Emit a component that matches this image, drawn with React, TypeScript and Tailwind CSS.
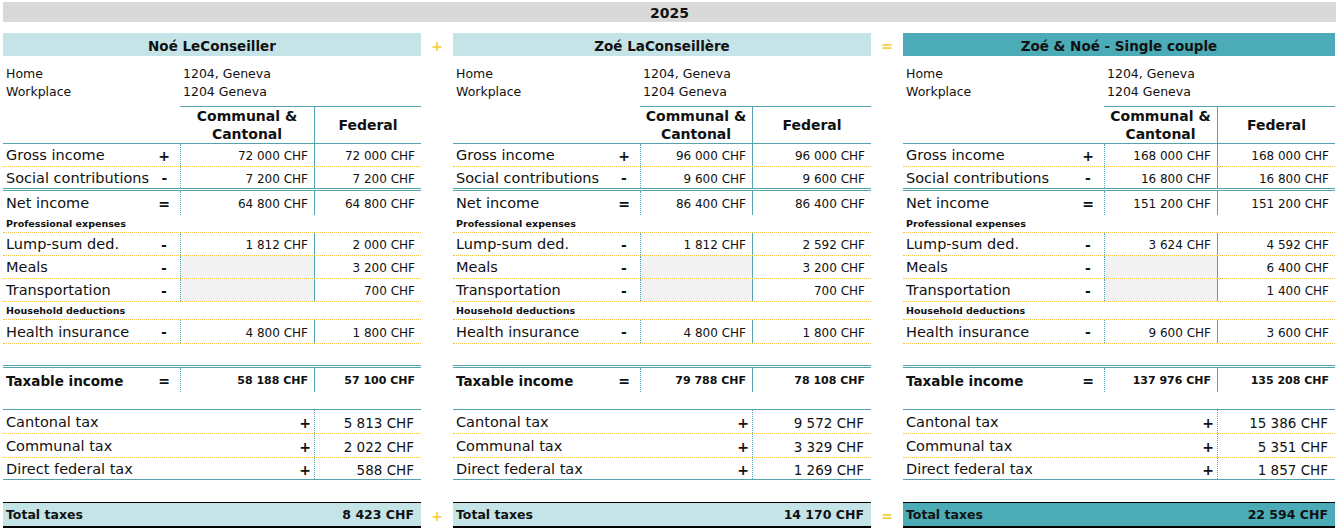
type Panel = {
  name: string;
  dark?: boolean;
  w: string;
  labelW: string;
  ccW: string;
  taxLabelW: string;
  rows: {
    gross: [string, string];
    social: [string, string];
    net: [string, string];
    lump: [string, string];
    meals: string;
    transport: string;
    health: [string, string];
    taxable: [string, string];
  };
  taxes: [string, string, string];
  total: string;
};

const panels: Panel[] = [
  {
    name: "Noé LeConseiller",
    w: "w-[418px]",
    labelW: "w-[177px]",
    ccW: "w-[134px]",
    taxLabelW: "w-[311px]",
    rows: {
      gross: ["72 000 CHF", "72 000 CHF"],
      social: ["7 200 CHF", "7 200 CHF"],
      net: ["64 800 CHF", "64 800 CHF"],
      lump: ["1 812 CHF", "2 000 CHF"],
      meals: "3 200 CHF",
      transport: "700 CHF",
      health: ["4 800 CHF", "1 800 CHF"],
      taxable: ["58 188 CHF", "57 100 CHF"],
    },
    taxes: ["5 813 CHF", "2 022 CHF", "588 CHF"],
    total: "8 423 CHF",
  },
  {
    name: "Zoé LaConseillère",
    w: "w-[418px]",
    labelW: "w-[187px]",
    ccW: "w-[112px]",
    taxLabelW: "w-[299px]",
    rows: {
      gross: ["96 000 CHF", "96 000 CHF"],
      social: ["9 600 CHF", "9 600 CHF"],
      net: ["86 400 CHF", "86 400 CHF"],
      lump: ["1 812 CHF", "2 592 CHF"],
      meals: "3 200 CHF",
      transport: "700 CHF",
      health: ["4 800 CHF", "1 800 CHF"],
      taxable: ["79 788 CHF", "78 108 CHF"],
    },
    taxes: ["9 572 CHF", "3 329 CHF", "1 269 CHF"],
    total: "14 170 CHF",
  },
  {
    name: "Zoé & Noé - Single couple",
    dark: true,
    w: "w-[432px]",
    labelW: "w-[201px]",
    ccW: "w-[113px]",
    taxLabelW: "w-[314px]",
    rows: {
      gross: ["168 000 CHF", "168 000 CHF"],
      social: ["16 800 CHF", "16 800 CHF"],
      net: ["151 200 CHF", "151 200 CHF"],
      lump: ["3 624 CHF", "4 592 CHF"],
      meals: "6 400 CHF",
      transport: "1 400 CHF",
      health: ["9 600 CHF", "3 600 CHF"],
      taxable: ["137 976 CHF", "135 208 CHF"],
    },
    taxes: ["15 386 CHF", "5 351 CHF", "1 857 CHF"],
    total: "22 594 CHF",
  },
];

const Row = ({
  p,
  label,
  sign,
  cc,
  fed,
  rowCls,
  bold,
  grayCc,
}: {
  p: Panel;
  label: string;
  sign: string;
  cc?: string;
  fed: string;
  rowCls: string;
  bold?: boolean;
  grayCc?: boolean;
}) => (
  <div className={`flex ${rowCls}`}>
    <div className={`${p.labelW} flex items-center pl-[3px] pt-[2px]`}>
      <span className={`flex-1 whitespace-nowrap ${bold ? "text-[13.5px] font-bold" : "text-[14.5px]"}`}>
        {label}
      </span>
      <span className="w-[32px] text-center text-[14px] font-bold">{sign}</span>
    </div>
    <div
      className={`${p.ccW} flex items-center justify-end pr-[6px] pt-[2px] border-l border-dotted border-[#55a3ae] ${
        grayCc ? "bg-[#f2f2f2]" : ""
      } ${bold ? "text-[11px] font-bold" : "text-[12px]"}`}
    >
      {cc}
    </div>
    <div
      className={`flex-1 flex items-center justify-end pr-[6px] pt-[2px] border-l border-[#55a3ae] ${
        bold ? "text-[11px] font-bold" : "text-[12px]"
      }`}
    >
      {fed}
    </div>
  </div>
);

const TaxRow = ({ p, label, value, rowCls }: { p: Panel; label: string; value: string; rowCls: string }) => (
  <div className={`flex ${rowCls}`}>
    <div className={`${p.taxLabelW} flex items-center pl-[3px] pt-[3px]`}>
      <span className="flex-1 text-[14.5px]">{label}</span>
      <span className="w-[18px] text-center text-[14px] font-bold">+</span>
    </div>
    <div className="flex-1 flex items-center justify-end pr-[7px] pt-[3px] text-[13.5px] border-l border-dotted border-[#55a3ae]">
      {value}
    </div>
  </div>
);

const dotted = "border-b border-dotted border-[#f0c24e]";

const PanelView = ({ p }: { p: Panel }) => {
  const head = p.dark ? "bg-[#4bacb8]" : "bg-[#c5e4e8]";
  return (
    <div className={`${p.w} flex flex-col`}>
      <div className={`h-[23px] pt-[3px] ${head} flex items-center justify-center text-[13.5px] font-bold`}>{p.name}</div>

      <div className="pt-[9px] mb-[5px] text-[12.5px]">
        <div className="flex h-[18px] items-center">
          <div className={`${p.labelW} pl-[3px]`}>Home</div>
          <div className="pl-[3px]">1204, Geneva</div>
        </div>
        <div className="flex h-[18px] items-center">
          <div className={`${p.labelW} pl-[3px]`}>Workplace</div>
          <div className="pl-[3px]">1204 Geneva</div>
        </div>
      </div>

      <div className="flex h-[38px] border-b border-[#55a3ae]">
        <div className={p.labelW} />
        <div
          className={`${p.ccW} border-t border-[#55a3ae] flex flex-col items-center justify-center text-[14px] font-bold leading-[18px]`}
        >
          <span>Communal &amp;</span>
          <span>Cantonal</span>
        </div>
        <div className="flex-1 border-t border-l border-[#55a3ae] flex items-center justify-center text-[14px] font-bold">
          Federal
        </div>
      </div>

      <Row p={p} label="Gross income" sign="+" cc={p.rows.gross[0]} fed={p.rows.gross[1]} rowCls={`h-[23px] ${dotted}`} />
      <Row
        p={p}
        label="Social contributions"
        sign="-"
        cc={p.rows.social[0]}
        fed={p.rows.social[1]}
        rowCls="h-[24px] border-b-[3px] border-double border-[#55a3ae]"
      />
      <Row p={p} label="Net income" sign="=" cc={p.rows.net[0]} fed={p.rows.net[1]} rowCls="h-[24px]" />
      <div className={`h-[18px] flex items-center pl-[3px] pt-[1px] text-[9.5px] font-bold ${dotted}`}>Professional expenses</div>
      <Row p={p} label="Lump-sum ded." sign="-" cc={p.rows.lump[0]} fed={p.rows.lump[1]} rowCls={`h-[23px] ${dotted}`} />
      <Row p={p} label="Meals" sign="-" grayCc fed={p.rows.meals} rowCls={`h-[23px] ${dotted}`} />
      <Row p={p} label="Transportation" sign="-" grayCc fed={p.rows.transport} rowCls={`h-[23px] ${dotted}`} />
      <div className={`h-[18px] flex items-center pl-[3px] pt-[1px] text-[9.5px] font-bold ${dotted}`}>Household deductions</div>
      <Row p={p} label="Health insurance" sign="-" cc={p.rows.health[0]} fed={p.rows.health[1]} rowCls={`h-[24px] ${dotted}`} />

      <div className="mt-[21px]">
        <Row
          p={p}
          label="Taxable income"
          sign="="
          bold
          cc={p.rows.taxable[0]}
          fed={p.rows.taxable[1]}
          rowCls="h-[27px] border-t-[3px] border-double border-[#55a3ae]"
        />
      </div>

      <div className="mt-[17px] border-t border-[#55a3ae]">
        <TaxRow p={p} label="Cantonal tax" value={p.taxes[0]} rowCls={`h-[24px] ${dotted}`} />
        <TaxRow p={p} label="Communal tax" value={p.taxes[1]} rowCls={`h-[24px] ${dotted}`} />
        <TaxRow p={p} label="Direct federal tax" value={p.taxes[2]} rowCls="h-[22px] border-b border-[#55a3ae]" />
      </div>

      <div
        className={`mt-[22px] h-[26px] pt-[2px] flex items-center justify-between pl-[3px] pr-[7px] border-t border-b-2 border-black ${head} text-[12.5px] font-bold`}
      >
        <span>Total taxes</span>
        <span>{p.total}</span>
      </div>
    </div>
  );
};

const Sep = ({ sign }: { sign: string }) => (
  <div className="w-[32px] flex flex-col justify-between text-[#f5cf4a] font-bold text-[14px]">
    <div className="h-[23px] pt-[3px] flex items-center justify-center">{sign}</div>
    <div className="h-[26px] pt-[2px] flex items-center justify-center">{sign}</div>
  </div>
);

export default function App() {
  return (
    <div className="w-[1339px] h-[530px] bg-white pt-[2px] px-[3px] text-[#111] font-['DejaVu_Sans',sans-serif]">
      <div className="w-[1333px] h-[20px] pt-[2px] bg-[#d9d9d9] flex items-center justify-center text-[14px] font-bold">
        2025
      </div>
      <div className="mt-[11px] flex">
        <PanelView p={panels[0]} />
        <Sep sign="+" />
        <PanelView p={panels[1]} />
        <Sep sign="=" />
        <PanelView p={panels[2]} />
      </div>
    </div>
  );
}
